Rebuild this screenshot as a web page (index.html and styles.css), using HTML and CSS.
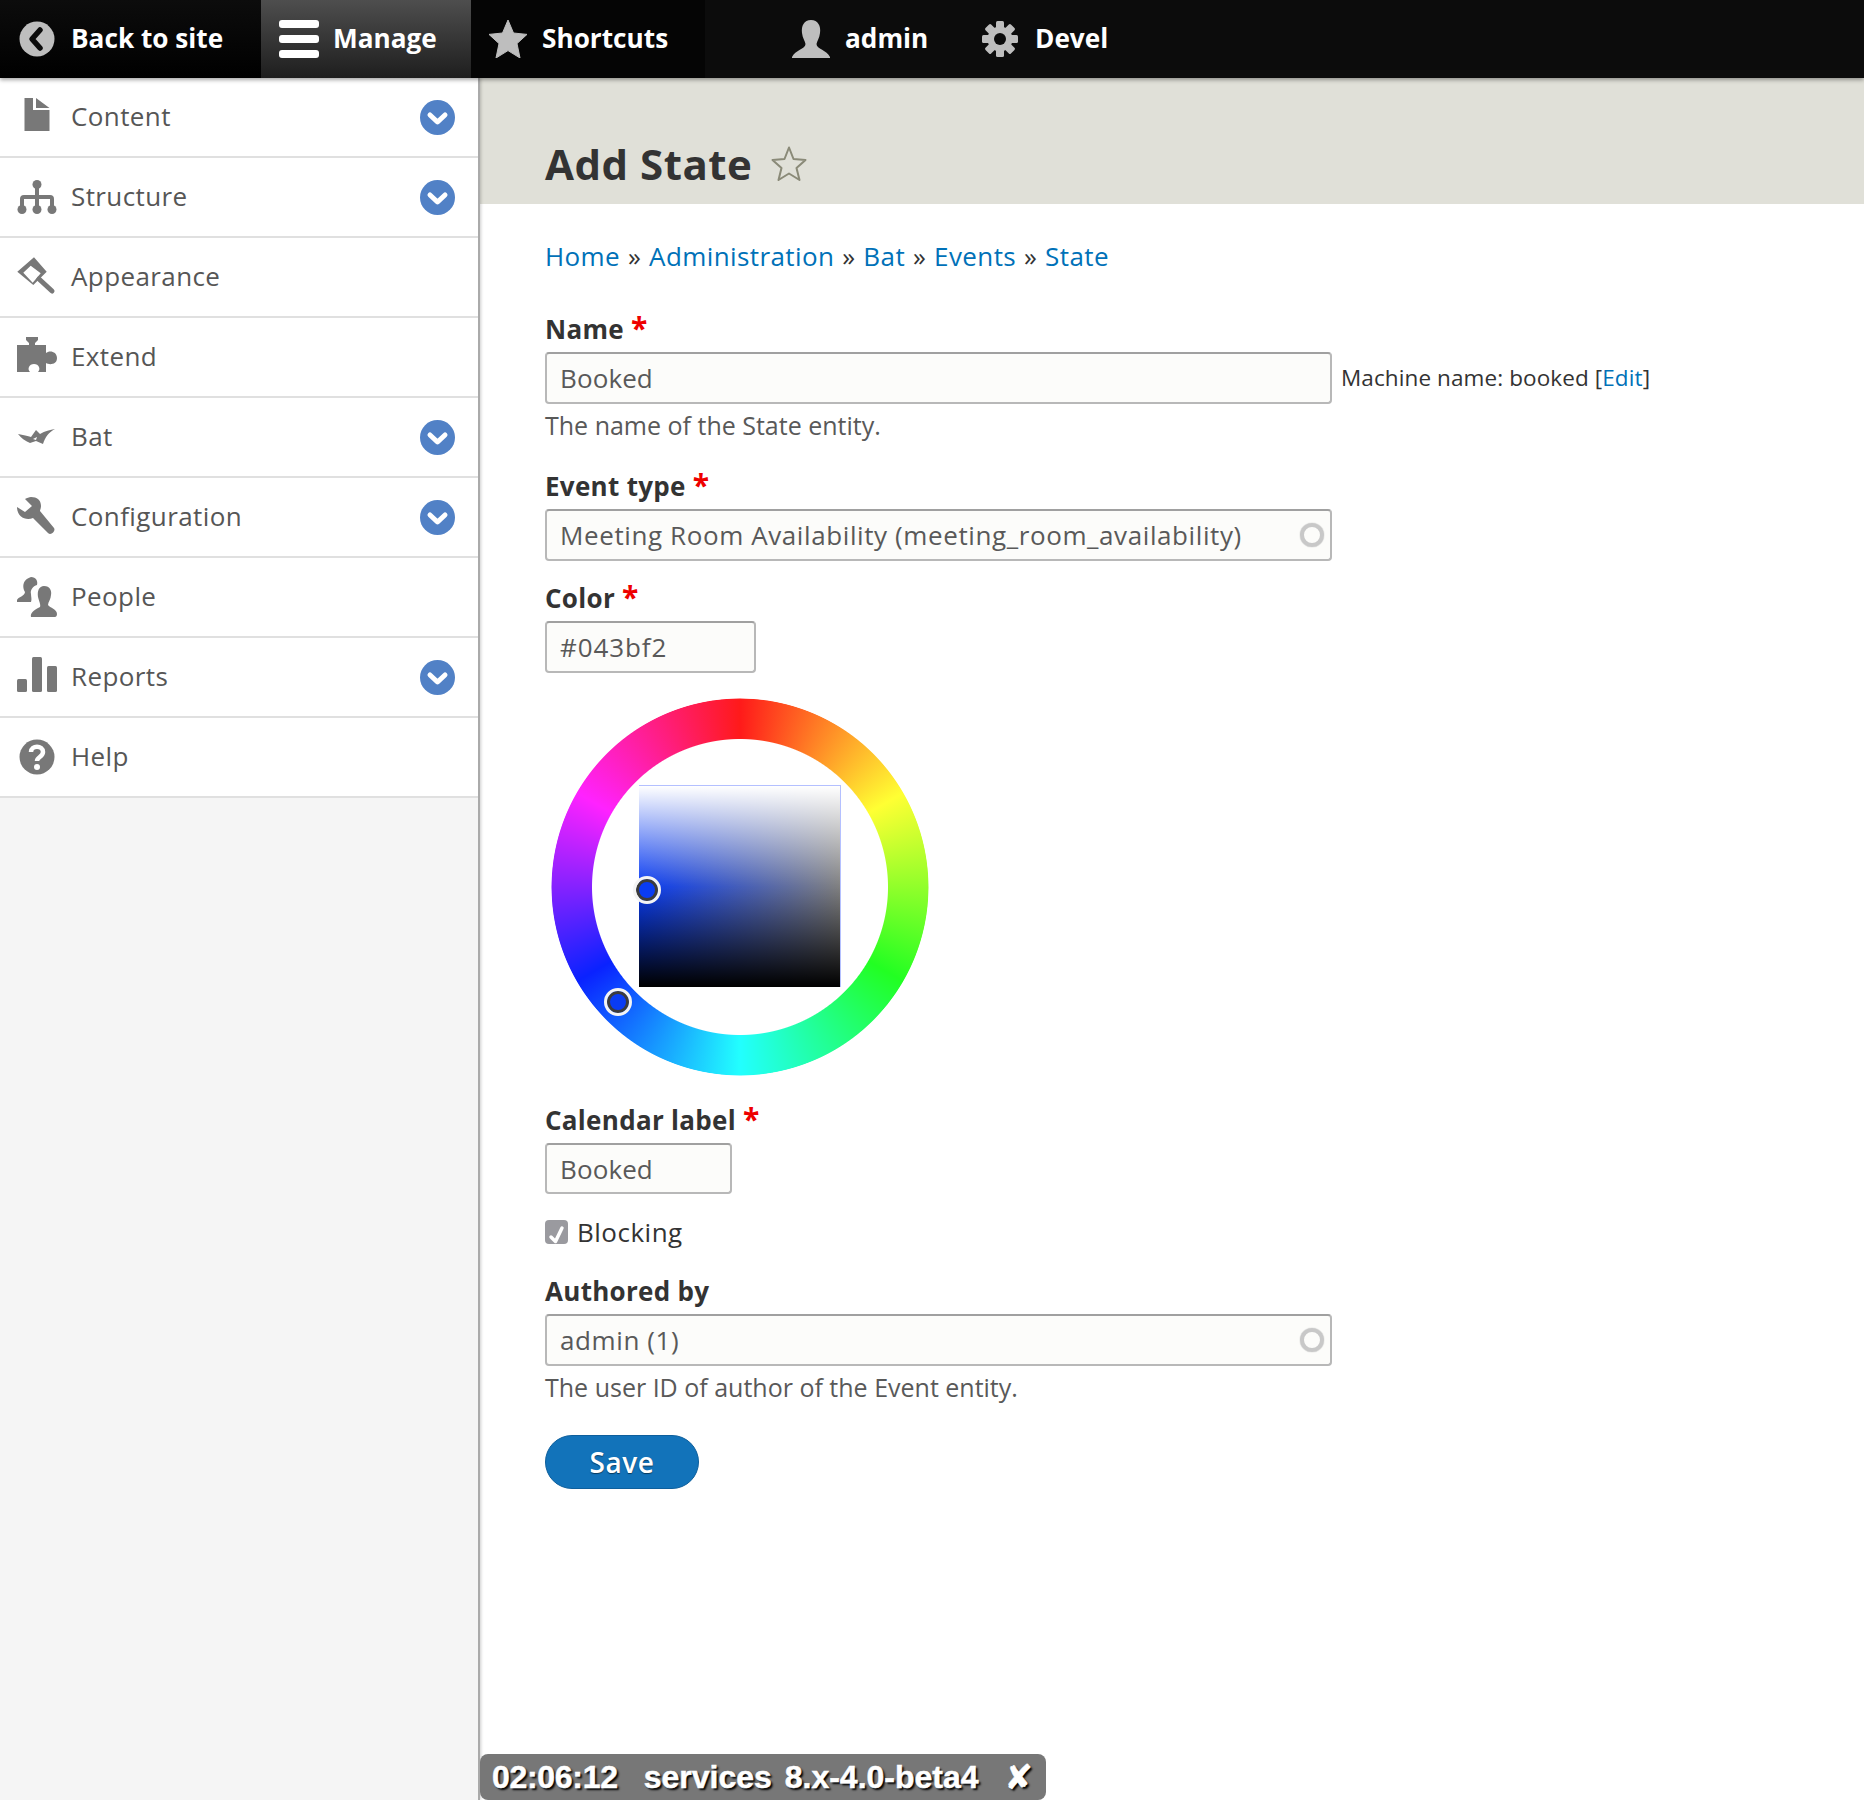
FILE: index.html
```html
<!DOCTYPE html>
<html>
  <head>
    <meta charset="UTF-8" />
    <meta name="viewport" content="width=device-width, initial-scale=1.0" />
    <title>Add State</title>
    <link rel="stylesheet" href="styles.css">
  </head>
  <body>
    <!-- top toolbar -->
    <div class="toolbar">
      <a class="tab tab-back">
        <svg class="tab-icon" width="36" height="38" viewBox="0 0 36 38">
          <ellipse cx="18" cy="19" rx="17.5" ry="17.5" fill="#bebebe" />
          <path d="M21 10 L13 19 L21 28" fill="none" stroke="#0c0c0c" stroke-width="5.5" stroke-linejoin="round" stroke-linecap="round" />
        </svg>
        <span class="tab-label">Back to site</span>
      </a>
      <a class="tab tab-manage">
        <svg class="tab-icon" width="40" height="38" viewBox="0 0 40 38">
          <rect x="0" y="0" width="40" height="8" rx="3" fill="#fff" />
          <rect x="0" y="15" width="40" height="8" rx="3" fill="#fff" />
          <rect x="0" y="30" width="40" height="8" rx="3" fill="#fff" />
        </svg>
        <span class="tab-label">Manage</span>
      </a>
      <a class="tab tab-shortcuts">
        <svg class="tab-icon" width="38" height="38" viewBox="0 0 38 38">
          <path d="M19 0 L24.5 13 L38 14.4 L28 23.6 L31 38 L19 30.6 L7 38 L10 23.6 L0 14.4 L13.5 13 Z" fill="#bebebe" stroke="#bebebe" stroke-linejoin="round" />
        </svg>
        <span class="tab-label">Shortcuts</span>
      </a>
      <a class="tab tab-user">
        <svg class="tab-icon" width="38" height="38" viewBox="0 0 38 38">
          <path d="M19 0 C26 0 29 6 28 13 C27.500 18 25 21 24.500 24 C24.500 29 35 30 38 37 L38 38 L0 38 L0 37 C3 30 13.500 29 13.500 24 C13 21 10.500 18 10 13 C9 6 12 0 19 0 Z" fill="#bebebe" />
        </svg>
        <span class="tab-label">admin</span>
      </a>
      <a class="tab tab-devel">
        <svg class="tab-icon" width="36" height="36" viewBox="0 0 36 36">
          <g fill="#bebebe">
            <rect x="14" y="0" width="8" height="36" rx="1.500" />
            <rect x="14" y="0" width="8" height="36" rx="1.500" transform="rotate(45 18 18)" />
            <rect x="14" y="0" width="8" height="36" rx="1.500" transform="rotate(90 18 18)" />
            <rect x="14" y="0" width="8" height="36" rx="1.500" transform="rotate(135 18 18)" />
          </g>
          <circle cx="18" cy="18" r="9" fill="none" stroke="#bebebe" stroke-width="7" />
          <circle cx="18" cy="18" r="6" fill="#0c0c0c" />
        </svg>
        <span class="tab-label">Devel</span>
      </a>
    </div>

    <div class="page">
      <!-- admin menu -->
      <div class="sidebar">
        <a class="menu-item">
          <svg class="menu-icon" width="40" height="40" viewBox="0 0 40 40">
            <path d="M7.500 1 L16 1 L16 13 L32.500 13 L32.500 34 L7.500 34 Z M19 1 L32.500 11 L19 11 Z" fill="#787878" />
          </svg>
          <span class="menu-label">Content</span>
          <svg class="menu-arrow" width="35" height="35" viewBox="0 0 35 35">
            <circle cx="17.500" cy="17.500" r="17.500" fill="#5181c6" />
            <path d="M10 15 L17.500 22 L25 15" fill="none" stroke="#fff" stroke-width="5" stroke-linejoin="round" stroke-linecap="round" />
          </svg>
        </a>
        <a class="menu-item">
          <svg class="menu-icon" width="40" height="40" viewBox="0 0 40 40">
            <path d="M20 10 V20 M5 32 V22 Q5 20 7 20 H33 Q35 20 35 22 V32 M20 20 V32" fill="none" stroke="#787878" stroke-width="4" />
            <circle cx="20" cy="7.500" r="4.500" fill="#787878" />
            <circle cx="5" cy="32.500" r="4.500" fill="#787878" />
            <circle cx="20" cy="32.500" r="4.500" fill="#787878" />
            <circle cx="35" cy="32.500" r="4.500" fill="#787878" />
          </svg>
          <span class="menu-label">Structure</span>
          <svg class="menu-arrow" width="35" height="35" viewBox="0 0 35 35">
            <circle cx="17.500" cy="17.500" r="17.500" fill="#5181c6" />
            <path d="M10 15 L17.500 22 L25 15" fill="none" stroke="#fff" stroke-width="5" stroke-linejoin="round" stroke-linecap="round" />
          </svg>
        </a>
        <a class="menu-item">
          <svg class="menu-icon" width="40" height="40" viewBox="0 0 40 40">
            <path d="M17 0.300 L0.300 14.700 L16.300 28 L29.700 14.700 Z M13.700 8.700 L6.300 15.700 L15.700 25.700 L23.700 16.300 Z" fill="#787878" fill-rule="evenodd" />
            <path d="M22 22 L35 34" fill="none" stroke="#787878" stroke-width="5" stroke-linecap="round" />
          </svg>
          <span class="menu-label">Appearance</span>
        </a>
        <a class="menu-item">
          <svg class="menu-icon" width="40" height="40" viewBox="0 0 40 40">
            <path d="M9 0 H21 V3 L18 6 V8 H29 V16 C32 13 40 14 40 21 C40 28 32 28 29 26 V35 H21 C24 32 22 27 17 27 C12 27 10 32 13 35 H0 V8 H12 V6 L9 3 Z" fill="#787878" />
          </svg>
          <span class="menu-label">Extend</span>
        </a>
        <a class="menu-item">
          <svg class="menu-icon" width="40" height="40" viewBox="0 0 40 40">
            <path d="M1 17 C6 18 11 19 14 20 L19 13 L23 17 C28 14 33 13 38 12 C32 15 28 20 26 27 L19 24 L13 26 C8 24 4 21 1 17 Z M16 22 L20 20 L19 23 Z" fill="#787878" fill-rule="evenodd" />
          </svg>
          <span class="menu-label">Bat</span>
          <svg class="menu-arrow" width="35" height="35" viewBox="0 0 35 35">
            <circle cx="17.500" cy="17.500" r="17.500" fill="#5181c6" />
            <path d="M10 15 L17.500 22 L25 15" fill="none" stroke="#fff" stroke-width="5" stroke-linejoin="round" stroke-linecap="round" />
          </svg>
        </a>
        <a class="menu-item">
          <svg class="menu-icon" width="40" height="40" viewBox="0 0 40 40">
            <path d="M14 0 C20 0 24 3 24 9 C24 11 23 13 23 14 L37 31 C39 34 34 39 31 36 L16 21 C9 24 0 20 0 10 L8 15 L15 9 L8 2 C10 1 12 0 14 0 Z" fill="#787878" />
          </svg>
          <span class="menu-label">Configuration</span>
          <svg class="menu-arrow" width="35" height="35" viewBox="0 0 35 35">
            <circle cx="17.500" cy="17.500" r="17.500" fill="#5181c6" />
            <path d="M10 15 L17.500 22 L25 15" fill="none" stroke="#fff" stroke-width="5" stroke-linejoin="round" stroke-linecap="round" />
          </svg>
        </a>
        <a class="menu-item">
          <svg class="menu-icon" width="40" height="40" viewBox="0 0 40 40">
            <path d="M14 0 C19 0 21 4 20 8 C16 9 13 13 14 17 C14 20 15 22 14 25 H0 V23 C1 20 8 19 8 15 C6 12 4 3 14 0 Z" fill="#787878" />
            <path d="M27 9 C33 9 35 14 34 18 C34 22 31 25 31 28 C33 31 40 32 40 37 C40 39 39 40 38 40 H14 C13 37 16 33 23 30 C24 28 22 24 21 20 C20 14 22 9 27 9 Z" fill="#787878" />
          </svg>
          <span class="menu-label">People</span>
        </a>
        <a class="menu-item">
          <svg class="menu-icon" width="40" height="40" viewBox="0 0 40 40">
            <rect x="0" y="22" width="10" height="13" rx="1.500" fill="#787878" />
            <rect x="15" y="0" width="10" height="35" rx="1.500" fill="#787878" />
            <rect x="30" y="9" width="10" height="26" rx="1.500" fill="#787878" />
          </svg>
          <span class="menu-label">Reports</span>
          <svg class="menu-arrow" width="35" height="35" viewBox="0 0 35 35">
            <circle cx="17.500" cy="17.500" r="17.500" fill="#5181c6" />
            <path d="M10 15 L17.500 22 L25 15" fill="none" stroke="#fff" stroke-width="5" stroke-linejoin="round" stroke-linecap="round" />
          </svg>
        </a>
        <a class="menu-item">
          <svg class="menu-icon" width="40" height="40" viewBox="0 0 40 40">
            <circle cx="20" cy="20" r="17.500" fill="#787878" />
            <path d="M14 15 C14 8 26 8 26 15 C26 20 20 20 20 24" fill="none" stroke="#fff" stroke-width="4.500" />
            <circle cx="20" cy="30" r="3" fill="#fff" />
          </svg>
          <span class="menu-label">Help</span>
        </a>
      </div>

      <div class="main">
        <div class="page-header">
          <h1>Add State</h1>
          <svg class="title-star" width="36" height="36" viewBox="0 0 36 36">
            <path d="M18 1.500 L22.500 13 L34.500 14 L25.500 22 L28.500 34 L18 27.500 L7.500 34 L10.500 22 L1.500 14 L13.500 13 Z" fill="none" stroke="#8a8a78" stroke-width="2" stroke-linejoin="round" />
          </svg>
        </div>

        <div class="content">
          <div class="breadcrumb">
            <a>Home</a> » <a>Administration</a> » <a>Bat</a> » <a>Events</a> » <a>State</a>
          </div>

          <div class="form-item">
            <div class="label">Name <span class="required">*</span></div>
            <div class="field-row">
              <div class="field field-wide field-name">Booked</div>
              <div class="machine-name">Machine name: booked [<a>Edit</a>]</div>
            </div>
            <div class="description">The name of the State entity.</div>
          </div>

          <div class="form-item">
            <div class="label">Event type <span class="required">*</span></div>
            <div class="field field-wide field-auto">Meeting Room Availability (meeting_room_availability)<span class="throbber"></span></div>
          </div>

          <div class="form-item">
            <div class="label">Color <span class="required">*</span></div>
            <div class="field field-color">#043bf2</div>
            <div class="picker">
              <div class="wheel"></div>
              <div class="square"></div>
              <div class="marker marker-wheel"></div>
              <div class="marker marker-square"></div>
            </div>
          </div>

          <div class="form-item">
            <div class="label">Calendar label <span class="required">*</span></div>
            <div class="field field-small">Booked</div>
          </div>

          <div class="checkbox-row">
            <span class="checkbox">
              <svg width="23" height="24" viewBox="0 0 23 24">
                <path d="M6 15 L10.500 19.500 L17 6" fill="none" stroke="#fff" stroke-width="3.500" stroke-linecap="round" stroke-linejoin="round" />
              </svg>
            </span>
            Blocking
          </div>

          <div class="form-item">
            <div class="label">Authored by</div>
            <div class="field field-wide field-auto">admin (1)<span class="throbber"></span></div>
            <div class="description">The user ID of author of the Event entity.</div>
          </div>

          <button class="save">Save</button>
        </div>
      </div>
    </div>

    <div class="env-tag">
      <span>02:06:12</span>
      <span class="env-name">services 8.x-4.0-beta4</span>
      <span class="env-close">✘</span>
    </div>
  </body>
</html>
```

FILE: styles.css
```css
body {
  font-family: "Open Sans", "DejaVu Sans", sans-serif;
  font-size: 26px;
  letter-spacing: 0.4px;
  color: #333;
  margin: 0;
  min-height: 1800px;
  display: flex;
  flex-direction: column;
}
a {
  color: #0071b8;
}

/* toolbar */
.toolbar {
  height: 78px;
  background: #0c0c0c;
  display: flex;
  align-items: center;
  box-shadow: 0 2px 4px rgba(0, 0, 0, 0.35);
  position: relative;
  z-index: 2;
}
.tab {
  height: 78px;
  display: flex;
  align-items: center;
  color: #fff;
  font-weight: 700;
  font-size: 26.200px;
  letter-spacing: 0;
  box-sizing: border-box;
}
.tab-icon {
  flex: none;
}
.tab-label {
  margin-bottom: 2px;
}
.tab-back {
  width: 261px;
  padding-left: 19px;
  gap: 16px;
  background: linear-gradient(#0c0c0c, #000);
}
.tab-manage {
  width: 210px;
  padding-left: 18px;
  gap: 14px;
  background: linear-gradient(#4e4e4e, #1e1e1e);
}
.tab-shortcuts {
  width: 234px;
  padding-left: 18px;
  gap: 15px;
  background: #050505;
}
.tab-user {
  padding-left: 87px;
  gap: 15px;
  width: 277px;
}
.tab-devel {
  padding-left: 0;
  gap: 17px;
}

/* sidebar */
.page {
  flex: 1;
  display: flex;
}
.sidebar {
  width: 478px;
  flex: none;
  background: #f5f5f5;
  border-right: 2px solid #aaa;
  box-shadow: 1px 0 3px rgba(0, 0, 0, 0.2);
  position: relative;
  z-index: 1;
}
.menu-item {
  height: 78px;
  display: flex;
  align-items: center;
  padding: 0 23px 0 17px;
  gap: 14px;
  background: #fff;
  border-bottom: 2px solid #e0e0e0;
  color: #565656;
}
.menu-label {
  margin-bottom: 2px;
}
.menu-arrow {
  margin-left: auto;
}

/* main column */
.main {
  flex: 1;
}
.page-header {
  height: 126px;
  box-sizing: border-box;
  padding: 61px 0 0 65px;
  background: #e0e0d8;
  display: flex;
  align-items: flex-start;
  gap: 19px;
}
h1 {
  margin: 0;
  font-size: 42px;
  letter-spacing: 0.5px;
  line-height: 50px;
  font-weight: 700;
  color: #333;
}
.title-star {
  margin-top: 7px;
}
.content {
  padding: 36px 0 0 65px;
}
.breadcrumb {
  line-height: 32px;
  word-spacing: 0.700px;
  margin-bottom: 41px;
}
.form-item {
  margin-top: 21px;
}
.label {
  font-weight: 700;
  letter-spacing: 0.3px;
  line-height: 32px;
  margin-bottom: 7px;
  color: #333;
}
.required {
  color: #e00;
  font-size: 30px;
  line-height: 20px;
}
.field-row {
  display: flex;
  align-items: center;
  gap: 9px;
}
.field {
  height: 52px;
  box-sizing: border-box;
  display: flex;
  align-items: center;
  padding: 0 13px;
  background: #fcfcfa;
  border: 2px solid #b8b8b8;
  border-top-color: #a0a0a0;
  border-radius: 4px;
  color: #595959;
}
.field-wide {
  width: 787px;
}
.field-name {
  letter-spacing: 0.1px;
}
.field-auto {
  justify-content: space-between;
  letter-spacing: 0.6px;
}
.field-color {
  width: 211px;
  letter-spacing: 0.9px;
}
.field-small {
  width: 187px;
  height: 51px;
  letter-spacing: 0.1px;
}
.throbber {
  width: 24px;
  height: 24px;
  margin-right: -7px;
  box-sizing: border-box;
  border: 4px solid #c8c8c8;
  border-radius: 50%;
  box-shadow: 0 0 1px #999;
}
.machine-name {
  font-size: 22.500px;
  letter-spacing: 0.1px;
  margin-bottom: 2px;
}
.description {
  margin-top: 6px;
  padding-bottom: 9px;
  line-height: 30px;
  font-size: 25px;
  letter-spacing: 0;
  color: #595959;
}

/* colour picker */
.picker {
  position: relative;
  width: 378px;
  height: 378px;
  margin: 25px 0 28px 6px;
  display: grid;
  place-items: center;
}
.wheel,
.square {
  grid-area: 1 / 1;
}
.wheel {
  width: 100%;
  height: 100%;
  border-radius: 50%;
  background: conic-gradient(#ff1a1a, #ffff33 60deg, #22ff22 120deg, #22ffff 180deg, #0a22ff 240deg, #ff22ff 300deg, #ff1a1a);
  -webkit-mask: radial-gradient(circle closest-side, transparent 147.500px, #000 148.500px, #000 188px, transparent 189px);
  mask: radial-gradient(circle closest-side, transparent 147.500px, #000 148.500px, #000 188px, transparent 189px);
}
.square {
  width: 202px;
  height: 202px;
  margin-bottom: 2px;
  box-sizing: border-box;
  border-top: 1px solid #b4c0ff;
  border-right: 1px solid #b4c0ff;
  background: linear-gradient(#fff, rgba(255, 255, 255, 0) 50%, rgba(0, 0, 0, 0) 50%, #000),
    linear-gradient(to right, #0a3cf2, #808080);
}
.marker {
  position: absolute;
  width: 22px;
  height: 22px;
  box-sizing: border-box;
  border-radius: 50%;
  background: #0a3cf2;
  border: 3px solid #3c3c3c;
  outline: 3px solid #f4f4f4;
}
.marker-wheel {
  left: 56px;
  top: 293px;
}
.marker-square {
  left: 85px;
  top: 181px;
}

/* checkbox */
.checkbox-row {
  display: flex;
  align-items: center;
  gap: 9px;
  margin: 22px 0 27px;
  line-height: 32px;
  letter-spacing: 0.5px;
}
.checkbox {
  width: 23px;
  height: 24px;
  border-radius: 4px;
  background: #9a9a9f;
  display: block;
}

/* save */
.save {
  display: block;
  margin-top: 24px;
  width: 154px;
  height: 54px;
  border: 1px solid #0e5f9c;
  border-radius: 27px;
  background: #1273ba;
  color: #fff;
  font: 600 28px "Open Sans", sans-serif;
  letter-spacing: 0.6px;
  text-shadow: 0 1px 1px rgba(0, 0, 0, 0.5);
}

/* environment tag */
.env-tag {
  position: fixed;
  left: 480px;
  bottom: 0;
  width: 566px;
  height: 46px;
  box-sizing: border-box;
  padding: 0 14px 0 12px;
  display: flex;
  align-items: center;
  gap: 26px;
  background: #777;
  border-radius: 8px;
  color: #fff;
  font: 700 32px "Liberation Sans", sans-serif;
  white-space: nowrap;
  letter-spacing: -0.3px;
  -webkit-text-stroke: 0.5px #fff;
  text-shadow: 2px 2px 2px #000;
  z-index: 3;
}
.env-name {
  letter-spacing: 0;
  word-spacing: 4px;
}
.env-close {
  font-family: "DejaVu Sans", sans-serif;
  font-size: 34px;
  margin-left: auto;
}
```
